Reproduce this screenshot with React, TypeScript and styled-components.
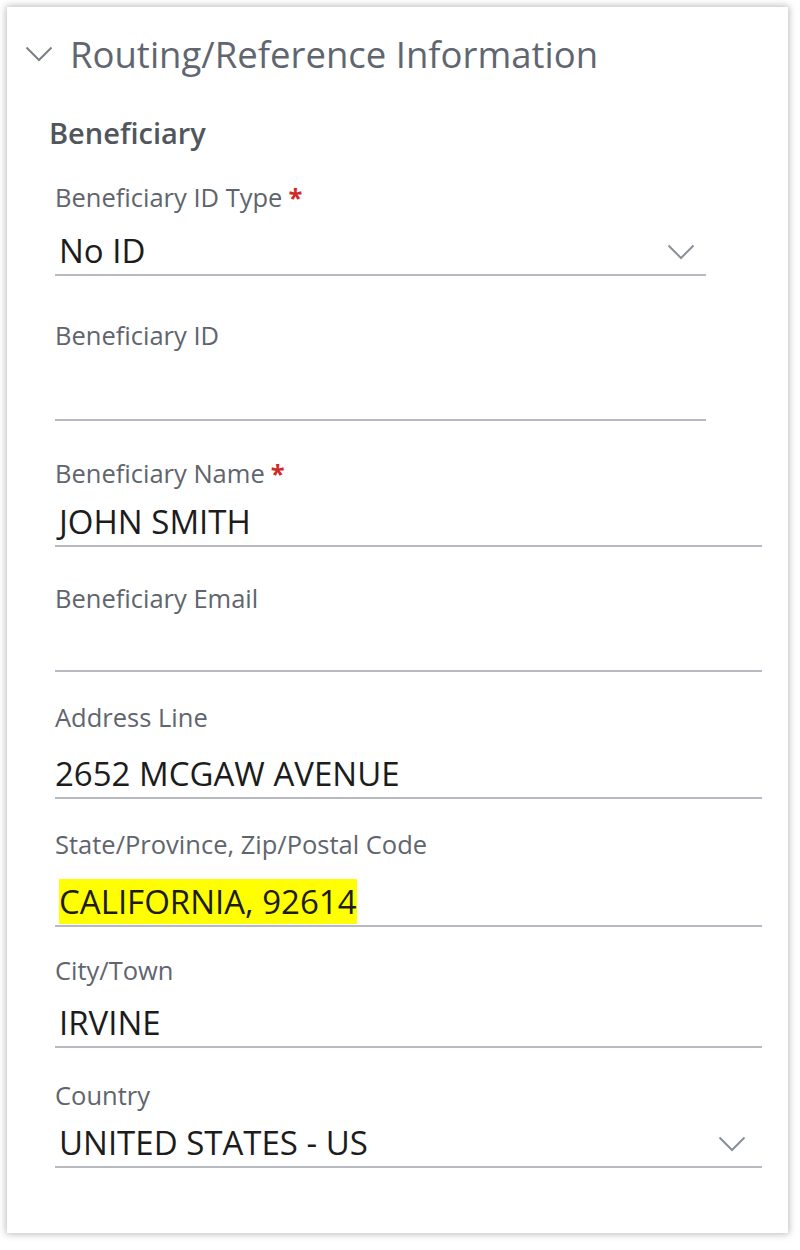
import React from "react";
import styled, { createGlobalStyle } from "styled-components";

const GlobalStyle = createGlobalStyle`
  html, body {
    margin: 0;
    padding: 0;
    background: #ffffff;
  }
  body {
    font-family: "Open Sans", "Noto Sans", "Liberation Sans", sans-serif;
  }
  * {
    box-sizing: border-box;
  }
`;

const Page = styled.div`
  padding: 7px 12px 17px 7px;
`;

const Card = styled.section`
  width: 781px;
  height: 1226px;
  background: #ffffff;
  box-shadow: 0 0 7px 1px rgba(0, 0, 0, 0.28);
  padding: 25px 0 0 18px;
`;

const Header = styled.div`
  display: flex;
  align-items: center;
  gap: 17px;
  height: 44px;
`;

const HeaderTitle = styled.h2`
  margin: 0;
  font-size: 36.5px;
  line-height: 44px;
  font-weight: 400;
  color: #5f6670;
`;

const Content = styled.div`
  display: flex;
  flex-direction: column;
  padding: 0 26px 0 30px;
`;

const SectionTitle = styled.h3`
  margin: 40px 0 0 -6px;
  font-size: 29px;
  line-height: 34px;
  font-weight: 600;
  color: #51565d;
`;

const Field = styled.div<{ $top: number; $narrow?: boolean }>`
  display: flex;
  flex-direction: column;
  margin-top: ${(p) => p.$top}px;
  width: ${(p) => (p.$narrow ? "651px" : "100%")};
`;

const Label = styled.label`
  font-size: 25.5px;
  line-height: 30px;
  color: #60656d;
`;

const Required = styled.span`
  margin-left: 6px;
  color: #cf2a27;
  font-weight: 700;
`;

const Control = styled.div<{ $h: number; $flush?: boolean; $narrow?: boolean }>`
  display: flex;
  align-items: flex-end;
  height: ${(p) => p.$h}px;
  padding: 0 ${(p) => (p.$narrow ? "11px" : "16px")} 3px
    ${(p) => (p.$flush ? "0" : "4px")};
  border-bottom: 2px solid #b7bbc1;
`;

const Value = styled.span`
  font-size: 33px;
  line-height: 40px;
  color: #1c1c1c;
  white-space: nowrap;
`;

const Highlight = styled.span`
  background: #ffff00;
`;

const Caret = styled.svg`
  flex: none;
  margin: 0 0 11px auto;
`;

const ChevronDown = ({ color = "#8a9099" }: { color?: string }) => (
  <Caret width="28" height="16" viewBox="0 0 28 16">
    <polyline
      points="1.5,1.5 14,14 26.5,1.5"
      fill="none"
      stroke={color}
      strokeWidth="2"
    />
  </Caret>
);

type FieldDef = {
  label: string;
  value?: React.ReactNode;
  required?: boolean;
  select?: boolean;
  narrow?: boolean;
  flush?: boolean;
  top: number;
  height: number;
};

const fields: FieldDef[] = [
  { label: "Beneficiary ID Type", value: "No ID", required: true, select: true, narrow: true, top: 32, height: 64 },
  { label: "Beneficiary ID", narrow: true, top: 44, height: 71 },
  { label: "Beneficiary Name", value: "JOHN SMITH", required: true, top: 37, height: 59 },
  { label: "Beneficiary Email", top: 36, height: 59 },
  { label: "Address Line", value: "2652 MCGAW AVENUE", flush: true, top: 30, height: 67 },
  {
    label: "State/Province, Zip/Postal Code",
    value: <Highlight>CALIFORNIA, 92614</Highlight>,
    top: 30,
    height: 68,
  },
  { label: "City/Town", value: "IRVINE", top: 28, height: 63 },
  { label: "Country", value: "UNITED STATES - US", select: true, top: 32, height: 58 },
];

export default function App() {
  return (
    <>
      <GlobalStyle />
      <Page>
        <Card>
          <Header>
            <svg width="28" height="16" viewBox="0 0 28 16">
              <polyline
                points="1.5,1.5 14,14 26.5,1.5"
                fill="none"
                stroke="#7b8088"
                strokeWidth="2"
              />
            </svg>
            <HeaderTitle>Routing/Reference Information</HeaderTitle>
          </Header>
          <Content>
            <SectionTitle>Beneficiary</SectionTitle>
            {fields.map((f) => (
              <Field key={f.label} $top={f.top} $narrow={f.narrow}>
                <Label>
                  {f.label}
                  {f.required && <Required>*</Required>}
                </Label>
                <Control $h={f.height} $flush={f.flush} $narrow={f.narrow}>
                  <Value>{f.value}</Value>
                  {f.select && <ChevronDown />}
                </Control>
              </Field>
            ))}
          </Content>
        </Card>
      </Page>
    </>
  );
}
